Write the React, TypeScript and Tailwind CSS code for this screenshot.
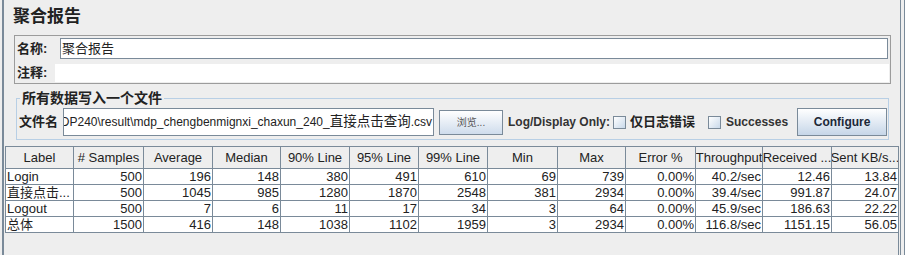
const cols = [
  "Label",
  "# Samples",
  "Average",
  "Median",
  "90% Line",
  "95% Line",
  "99% Line",
  "Min",
  "Max",
  "Error %",
  "Throughput",
  "Received ...",
  "Sent KB/s...",
];

const rows = [
  ["Login", "500", "196", "148", "380", "491", "610", "69", "739", "0.00%", "40.2/sec", "12.46", "13.84"],
  ["直接点击...", "500", "1045", "985", "1280", "1870", "2548", "381", "2934", "0.00%", "39.4/sec", "991.87", "24.07"],
  ["Logout", "500", "7", "6", "11", "17", "34", "3", "64", "0.00%", "45.9/sec", "186.63", "22.22"],
  ["总体", "1500", "416", "148", "1038", "1102", "1959", "3", "2934", "0.00%", "116.8/sec", "1151.15", "56.05"],
];

function CheckBox() {
  return (
    <span className="block h-[13px] w-[13px] shrink-0 border border-[#7a8a99] bg-gradient-to-br from-white to-[#c9d9ea]" />
  );
}

export default function App() {
  return (
    <div className="flex h-[255px] w-[905px] overflow-hidden bg-[#eeeeee] font-['Liberation_Sans','Noto_Sans_CJK_SC',sans-serif] text-[#333333]">
      <div className="w-[2px] shrink-0" />
      <div className="w-[2px] shrink-0 bg-[#7a8a99]" />

      <div className="flex w-[896px] shrink-0 flex-col">
        {/* title */}
        <div className="h-[35px] pl-[9px] pt-[6px] text-[17px] font-bold leading-[22px] text-[#222]">
          聚合报告
        </div>

        {/* name / comment */}
        <div className="ml-[10px] w-[877px] border border-[#9c9c9c] px-[1px] py-[1px]">
          <div className="flex items-center pt-[1px]">
            <span className="w-[44px] shrink-0 pl-[1px] text-[13px] font-bold leading-[21px] text-[#222]">名称:</span>
            <div className="mr-[1px] flex h-[21px] flex-1 items-center border border-[#7a8a99] bg-white pl-[1px] text-[13px] text-[#222]">
              聚合报告
            </div>
          </div>
          <div className="mt-[5px] flex h-[18px] items-center">
            <span className="w-[39px] shrink-0 pl-[1px] text-[13px] font-bold leading-[18px] text-[#222]">注释:</span>
            <div className="h-full flex-1 bg-white" />
          </div>
        </div>

        {/* file section */}
        <fieldset className="ml-[12px] mt-[5px] w-[873px] border border-[#b8cfe5] pb-[3px] pl-[2px]">
          <legend className="ml-[1px] px-[2px] text-[14px] font-bold leading-[19px] text-[#222]">
            所有数据写入一个文件
          </legend>
          <div className="flex h-[28px] items-center">
            <span className="w-[44px] shrink-0 text-[13px] font-bold text-[#222]">文件名</span>
            <div className="flex h-[28px] w-[371px] shrink-0 items-center justify-end overflow-hidden border border-[#7a8a99] bg-white pr-[1px]">
              <span className="shrink-0 whitespace-nowrap text-[12px] text-[#222]">
                DP240\result\mdp_chengbenmignxi_chaxun_240_
                <span className="text-[13.5px]">直接点击查询</span>.csv
              </span>
            </div>
            <button className="ml-[5px] flex h-[25px] w-[64px] shrink-0 items-center justify-center border border-[#7a8a99] bg-gradient-to-b from-white to-[#cfdcec] text-[10px] text-[#555]">
              浏览...
            </button>
            <span className="ml-[5px] shrink-0 whitespace-nowrap text-[12px] font-bold text-[#333]">Log/Display Only:</span>
            <span className="ml-[3px]">
              <CheckBox />
            </span>
            <span className="ml-[4px] shrink-0 text-[13px] font-bold text-[#222]">仅日志错误</span>
            <span className="ml-[13px]">
              <CheckBox />
            </span>
            <span className="ml-[5px] shrink-0 text-[12px] font-bold text-[#333]">Successes</span>
            <button className="ml-[9px] flex h-[28px] w-[90px] shrink-0 items-center justify-center border border-[#7a8a99] bg-gradient-to-b from-white to-[#c6d6e8] text-[12px] font-bold text-[#1c2838]">
              Configure
            </button>
          </div>
        </fieldset>

        {/* results table */}
        <div className="ml-[1px] mt-[6px] w-[894px] flex-1 border-r border-[#7a8a99]">
          <div className="grid w-[893px] grid-cols-[67px_69px_68px_67px_68px_68px_68px_69px_67px_69px_66px_68px_66px] gap-px bg-[#7a8a99] pb-px pl-px pt-px text-[13px] text-[#222]">
            {cols.map((c) => (
              <div
                key={c}
                className="flex h-[21px] items-center justify-center overflow-hidden whitespace-nowrap bg-[#eeeeee] leading-[21px]"
              >
                {c}
              </div>
            ))}
            {rows.map((r) =>
              r.map((v, i) => (
                <div
                  key={r[0] + i}
                  className={
                    i === 0
                      ? "h-[15px] overflow-hidden whitespace-nowrap bg-white pl-[1px] leading-[15px]"
                      : "h-[15px] overflow-hidden whitespace-nowrap bg-white pr-[1px] text-right leading-[15px]"
                  }
                >
                  {v}
                </div>
              )),
            )}
          </div>
        </div>
      </div>

      <div className="w-[1px] shrink-0 bg-[#7a8a99]" />
      <div className="w-[3px] shrink-0" />
      <div className="w-[1px] shrink-0 bg-[#7a8a99]" />
    </div>
  );
}
